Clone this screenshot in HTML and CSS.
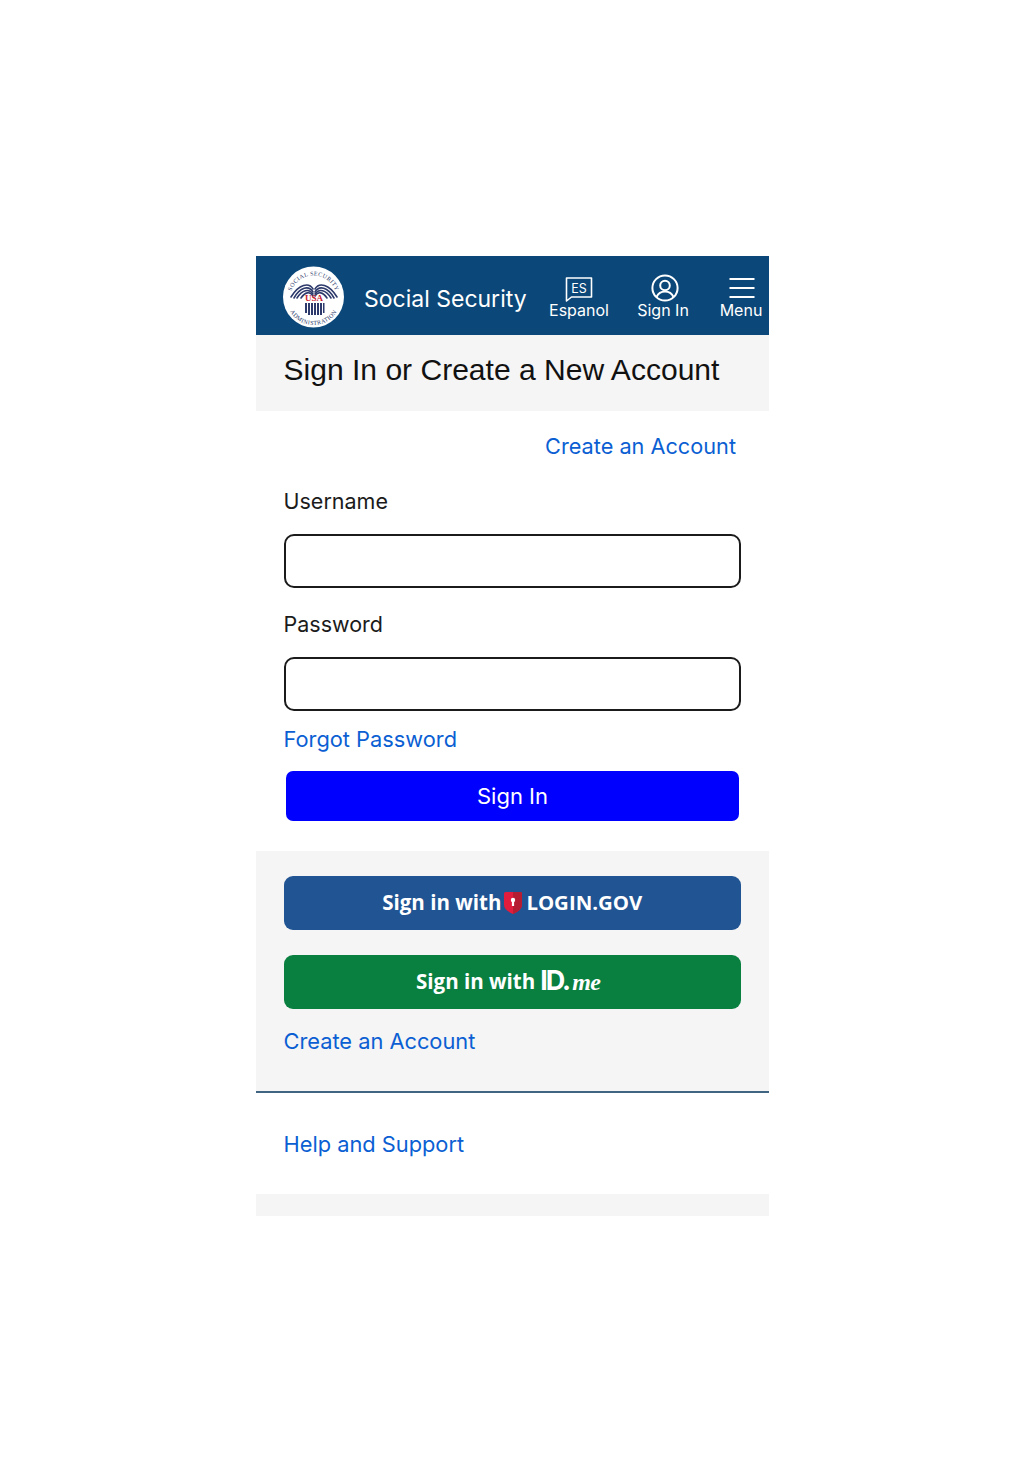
FILE: index.html
```html
<!DOCTYPE html>
<html lang="en">

<head>
  <meta charset="UTF-8">
  <meta name="viewport" content="width=device-width, initial-scale=1.0">
  <title>Sign In or Create a New Account</title>
  <link rel="stylesheet" href="styles.css">
</head>

<body>
  <div class="page">
    <header class="topbar">
      <svg class="seal" viewBox="0 0 64 64" width="64" height="64">
        <circle cx="31.5" cy="32" r="30.5" fill="#fff" />
        <defs>
          <path id="seal-top" d="M8 34 A23.5 23.5 0 0 1 55 34" />
          <path id="seal-bottom" d="M4.5 33 A27 27 0 0 0 58.5 33" />
          <g id="seal-wing" fill="none" stroke="#2d3a6b" stroke-width="1.6" stroke-linecap="round">
            <path d="M31 24 C27 17 17 19 9 32" />
            <path d="M31 27 C27 20 18 22 12 33" />
            <path d="M31 29 C27 23 20 25 15 33" />
            <path d="M31 31 C28 26 23 27 19 33" />
          </g>
        </defs>
        <text class="seal-text"><textPath href="#seal-top" startOffset="50%" text-anchor="middle">SOCIAL SECURITY</textPath></text>
        <text class="seal-text"><textPath href="#seal-bottom" startOffset="50%" text-anchor="middle">ADMINISTRATION</textPath></text>
        <use href="#seal-wing" />
        <use href="#seal-wing" transform="matrix(-1 0 0 1 64 0)" />
        <text class="seal-usa" x="32" y="36" text-anchor="middle">USA</text>
        <path d="M23 38h2v10h-2zM26 38h2v12h-2zM29 38h2v12h-2zM32 38h2v12h-2zM35 38h2v12h-2zM38 38h2v12h-2zM41 38h1.5v10h-1.5z" fill="#2d3a6b" />
      </svg>
      <span class="brand">Social Security</span>
      <a class="nav-item nav-es" href="#">
        <svg width="28" height="26" viewBox="0 0 28 26" fill="none" stroke="#fff" stroke-width="1.6">
          <path d="M1.5 2h25v19h-20l-5 4z" stroke-linejoin="round" />
          <text class="es-text" x="14" y="16.5" text-anchor="middle">ES</text>
        </svg>
        <span>Espanol</span>
      </a>
      <a class="nav-item nav-sign" href="#">
        <svg class="sign-icon" width="28" height="28" viewBox="0 0 28 28" fill="none" stroke="#fff" stroke-width="2">
          <circle cx="14" cy="14" r="12.6" />
          <circle cx="14" cy="11.5" r="4.8" />
          <path d="M5.5 23 C7.5 18.5 10.5 17.5 14 17.5 C17.5 17.5 20.5 18.5 22.5 23" />
        </svg>
        <span>Sign In</span>
      </a>
      <a class="nav-item nav-menu" href="#">
        <svg class="menu-icon" width="26" height="20" viewBox="0 0 26 20" stroke="#fff" stroke-width="2">
          <path d="M0.5 1h25M0.5 10h25M0.5 19h25" />
        </svg>
        <span>Menu</span>
      </a>
    </header>

    <div class="title-band">
      <h1>Sign In or Create a New Account</h1>
    </div>

    <form class="signin-form">
      <div class="create-row"><a href="#">Create an Account</a></div>
      <label class="field-label" for="username">Username</label>
      <input class="field-input" id="username" type="text">
      <label class="field-label field-label-pw" for="password">Password</label>
      <input class="field-input" id="password" type="password">
      <a class="forgot" href="#">Forgot Password</a>
      <button class="btn-signin" type="button">Sign In</button>
    </form>

    <section class="alt-signin">
      <a class="alt-btn alt-login" href="#">
        <span class="alt-label">Sign in with</span>
        <svg class="shield" width="18" height="22" viewBox="0 0 18 22">
          <path d="M0 1.5 Q0 0 1.5 0 H16.5 Q18 0 18 1.5 V13 Q18 18 9 22 Q0 18 0 13 Z" fill="#e21c3d" />
          <path d="M9 0 H16.5 Q18 0 18 1.5 V13 Q18 18 9 22 Z" fill="#b51d32" />
          <circle cx="9" cy="8" r="2.2" fill="#fff" />
          <rect x="7.9" y="8" width="2.2" height="6" fill="#fff" />
        </svg>
        <span class="login-word">LOGIN.GOV</span>
      </a>
      <a class="alt-btn alt-idme" href="#">
        <span class="alt-label">Sign in with</span>
        <span class="idme"><span class="idme-id">ID.</span><span class="idme-me">me</span></span>
      </a>
      <a class="alt-create" href="#">Create an Account</a>
    </section>

    <div class="help-row"><a href="#">Help and Support</a></div>
    <div class="foot-band"></div>
  </div>
</body>

</html>
```
FILE: styles.css
```css
* {
  box-sizing: border-box;
}

body {
  margin: 0;
  background: #fff;
  font-family: Inter, "Liberation Sans", sans-serif;
  color: #1b1b1b;
}

a {
  color: #0b5fd3;
  text-decoration: none;
}

.page {
  width: 513px;
  margin: 256px 0 0 256px;
}

/* top bar */
.topbar {
  height: 79px;
  background: #0b4778;
  display: flex;
  align-items: flex-start;
}

.seal {
  margin: 9px 0 0 26px;
  flex: none;
}

.seal-text {
  font: 400 6px "Liberation Serif", serif;
  fill: #2d3a6b;
  letter-spacing: .35px;
}

.seal-usa {
  font: 700 9px "Liberation Serif", serif;
  fill: #c8202f;
}

.es-text {
  font: 400 12.5px Inter, sans-serif;
  fill: #fff;
  stroke: none;
}

.brand {
  margin: 27px 0 0 18px;
  font-size: 23px;
  line-height: 32px;
  color: #fff;
  white-space: nowrap;
  width: 184px;
  flex: none;
}

.nav-item {
  color: #fff;
  font-size: 16px;
  line-height: 20px;
  display: flex;
  flex-direction: column;
  align-items: center;
  flex: none;
}

.nav-item span {
  white-space: nowrap;
}

.nav-es {
  width: 62px;
  margin-top: 20px;
}

.nav-es span {
  margin-top: -2px;
}

.nav-sign {
  width: 54px;
  margin: 18px 0 0 26px;
}

.nav-sign span {
  margin-top: -2px;
}

.sign-icon {
  margin-left: 4px;
}

.nav-menu {
  width: 46px;
  margin: 22px 0 0 28px;
}

.menu-icon {
  margin: 0 0 2px 2px;
}

/* heading */
.title-band {
  height: 76px;
  background: #f5f5f5;
  padding: 16px 28px 0 27.5px;
}

h1 {
  margin: 0;
  font: 400 30.05px/38px "Liberation Sans", Arial, sans-serif;
  color: #111;
  white-space: nowrap;
}

/* form */
.signin-form {
  padding: 21px 28px 30px 27.5px;
  display: flex;
  flex-direction: column;
}

.create-row {
  text-align: right;
  padding-right: 5px;
  font-size: 21.7px;
  line-height: 28px;
}

.field-label {
  margin-top: 27px;
  font-size: 21.5px;
  line-height: 28px;
}

.field-label-pw {
  margin-top: 22px;
}

.field-input {
  display: block;
  width: 457.5px;
  height: 54px;
  margin-top: 19px;
  border: 2px solid #1b1b1b;
  border-radius: 10px;
  background: #fff;
}

.forgot {
  margin-top: 14px;
  font-size: 21.8px;
  line-height: 28px;
}

.btn-signin {
  width: 453px;
  height: 50px;
  margin: 18px 0 0 2.5px;
  border: 0;
  border-radius: 7px;
  background: #00f;
  color: #fff;
  font: 400 22px Inter, sans-serif;
}

/* other sign in options */
.alt-signin {
  height: 242px;
  background: #f5f5f5;
  border-bottom: 2px solid #3f6583;
  padding: 25px 28px 0 27.5px;
  display: flex;
  flex-direction: column;
}

.alt-btn {
  width: 457.5px;
  height: 54px;
  border-radius: 9px;
  display: flex;
  align-items: center;
  justify-content: center;
  color: #fff;
  font: 700 20.5px "Open Sans", sans-serif;
  white-space: nowrap;
  padding-bottom: 3px;
}

.alt-login {
  background: #205493;
  gap: 3px;
}

.alt-login .login-word {
  font-size: 20.4px;
  font-weight: 700;
  margin-left: 1px;
}

.shield {
  margin-top: 2px;
}

.alt-idme {
  margin-top: 25px;
  background: #0a8040;
  gap: 5px;
  padding-right: 8px;
}

.idme {
  display: inline-flex;
  align-items: baseline;
}

.idme-id {
  font: 700 27px/1 Inter, sans-serif;
  letter-spacing: -2px;
}

.idme-me {
  font: italic 700 24px/1 "Liberation Serif", serif;
  margin-left: 3px;
  letter-spacing: -.5px;
}

.alt-create {
  margin-top: 18px;
  font-size: 21.8px;
  line-height: 28px;
}

.help-row {
  height: 101px;
  padding: 37px 28px 0 27.5px;
  font-size: 21.8px;
  line-height: 28px;
}

.foot-band {
  height: 22px;
  background: #f5f5f5;
}
```
